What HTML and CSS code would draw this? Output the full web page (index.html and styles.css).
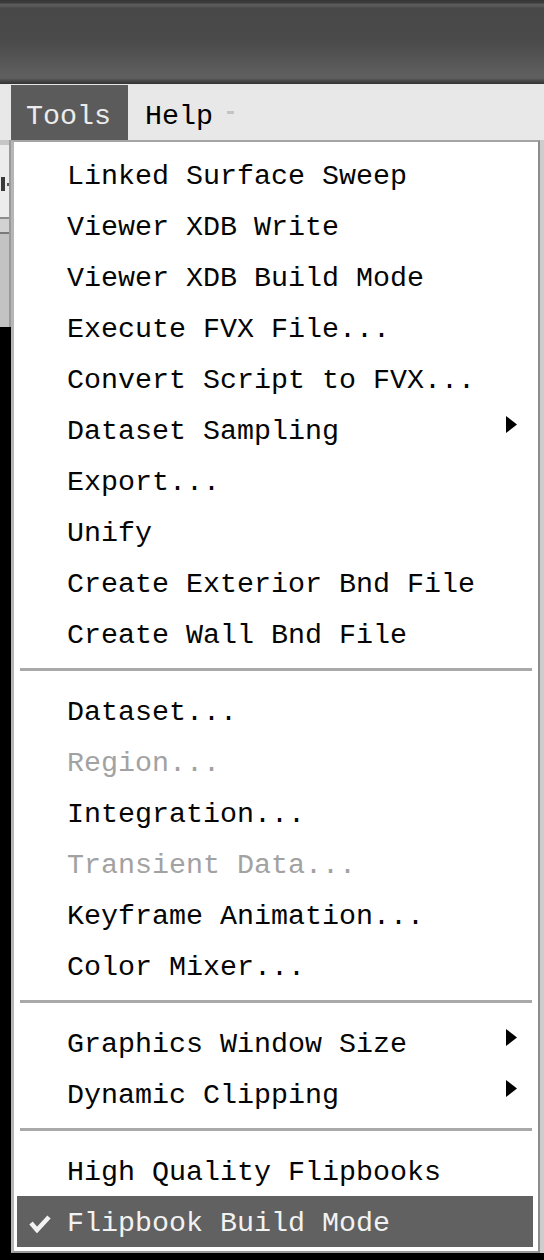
FILE: index.html
```html
<!DOCTYPE html>
<html>
<head>
<meta charset="utf-8">
<link rel="stylesheet" href="styles.css">
</head>
<body>
<div class="screen">
  <div class="titlebar"></div>
  <div class="menubar">
    <div class="mb-left"></div>
    <div class="mb-item active">Tools</div>
    <div class="mb-item">Help</div>
    <span class="mb-mark"></span>
  </div>
  <div class="main">
    <div class="side">
      <div class="s1"></div>
      <div class="s2"><i class="frag"></i><i class="dot"></i></div>
      <div class="s3"></div>
      <div class="s4"></div>
      <div class="s5"></div>
      <div class="s6"></div>
    </div>
    <div class="menu">
      <div class="item"><span class="icon"></span><span class="label">Linked Surface Sweep</span></div>
      <div class="item"><span class="icon"></span><span class="label">Viewer XDB Write</span></div>
      <div class="item"><span class="icon"></span><span class="label">Viewer XDB Build Mode</span></div>
      <div class="item"><span class="icon"></span><span class="label">Execute FVX File...</span></div>
      <div class="item"><span class="icon"></span><span class="label">Convert Script to FVX...</span></div>
      <div class="item"><span class="icon"></span><span class="label">Dataset Sampling</span><svg class="arrow" width="11" height="17" viewBox="0 0 11 17"><polygon points="0,0 11,8.5 0,17" fill="#000"/></svg></div>
      <div class="item"><span class="icon"></span><span class="label">Export...</span></div>
      <div class="item"><span class="icon"></span><span class="label">Unify</span></div>
      <div class="item"><span class="icon"></span><span class="label">Create Exterior Bnd File</span></div>
      <div class="item"><span class="icon"></span><span class="label">Create Wall Bnd File</span></div>
      <div class="sep"></div>
      <div class="item"><span class="icon"></span><span class="label">Dataset...</span></div>
      <div class="item disabled"><span class="icon"></span><span class="label">Region...</span></div>
      <div class="item"><span class="icon"></span><span class="label">Integration...</span></div>
      <div class="item disabled"><span class="icon"></span><span class="label">Transient Data...</span></div>
      <div class="item"><span class="icon"></span><span class="label">Keyframe Animation...</span></div>
      <div class="item"><span class="icon"></span><span class="label">Color Mixer...</span></div>
      <div class="sep"></div>
      <div class="item"><span class="icon"></span><span class="label">Graphics Window Size</span><svg class="arrow" width="11" height="17" viewBox="0 0 11 17"><polygon points="0,0 11,8.5 0,17" fill="#000"/></svg></div>
      <div class="item"><span class="icon"></span><span class="label">Dynamic Clipping</span><svg class="arrow" width="11" height="17" viewBox="0 0 11 17"><polygon points="0,0 11,8.5 0,17" fill="#000"/></svg></div>
      <div class="sep"></div>
      <div class="item"><span class="icon"></span><span class="label">High Quality Flipbooks</span></div>
      <div class="item selected"><span class="icon"><svg class="check" width="22" height="18" viewBox="0 0 22 18"><polyline points="2,8 8,15 20,2" fill="none" stroke="#f2f2f2" stroke-width="4.5"/></svg></span><span class="label">Flipbook Build Mode</span></div>
    </div>
    <div class="rside"></div>
  </div>
</div>
</body>
</html>
```
FILE: styles.css
```css
html, body {
  margin: 0;
  padding: 0;
}
body {
  background: #000;
  width: 544px;
  height: 1260px;
  overflow: hidden;
  font-family: "Liberation Mono", "DejaVu Sans Mono", monospace;
  font-size: 28.33px;
}
.screen {
  display: flex;
  flex-direction: column;
  width: 544px;
}
.titlebar {
  height: 84px;
  background: linear-gradient(to bottom,
    #363636 0px, #3c3c3c 3px, #5a5a5a 4px, #5a5a5a 6px, #484848 8px,
    #4a4a4a 40px, #525252 55px, #5c5c5c 70px, #5f5f5f 78px,
    #474747 81px, #333333 84px);
}
.menubar {
  height: 56px;
  background: #e8e8e8;
  display: flex;
  align-items: flex-start;
  position: relative;
}
.mb-left {
  width: 11px;
  height: 56px;
}
.mb-item {
  margin-top: 1px;
  height: 55px;
  box-sizing: border-box;
  padding: 8px 0 0 0;
  line-height: 47px;
  color: #000;
  white-space: nowrap;
}
.mb-item.active {
  width: 117px;
  padding-left: 15px;
  background: #5b5b5b;
  color: #ececec;
}
.mb-item + .mb-item {
  margin-left: 17px;
}
.mb-mark {
  position: absolute;
  left: 227px;
  top: 27px;
  width: 7px;
  height: 3px;
  background: #c4c4c4;
}
.main {
  display: flex;
  height: 1113px;
}
.side {
  width: 11px;
  display: flex;
  flex-direction: column;
}
.side > div {
  box-sizing: border-box;
  border-right: 2px solid #9a9a9a;
}
.s1 { height: 5px; background: #c6c6c6; }
.s2 {
  height: 72px;
  background: #ececec;
  display: flex;
  align-items: flex-start;
  justify-content: flex-end;
  gap: 2px;
  padding-top: 32px;
}
.s2 .frag {
  display: block;
  width: 4px;
  height: 14px;
  background: #3a3a3a;
}
.s2 .dot {
  display: block;
  width: 2px;
  height: 3px;
  margin-top: 6px;
  background: #555;
}
.s3 { height: 2px; background: #8c8c8c; }
.s4 { height: 13px; background: #d2d2d2; }
.s5 { height: 2px; background: #7a7a7a; }
.s6 { height: 93px; background: #c3c3c3; }
.menu {
  width: 529px;
  box-sizing: border-box;
  background: #fff;
  border-top: 2px solid #a4a4a4;
  border-left: 3px solid #b6b6b6;
  border-right: 2px solid #8c8c8c;
  border-bottom: 2px solid #9a9a9a;
  padding: 7px 0 4px 0;
  display: flex;
  flex-direction: column;
}
.item {
  display: flex;
  align-items: flex-start;
  height: 51px;
  box-sizing: border-box;
  margin: 0 5px 0 3px;
  padding: 5px 16px 0 0;
  line-height: 46px;
  color: #050505;
  white-space: nowrap;
}
.icon {
  width: 50px;
  flex: none;
  height: 46px;
}
.label {
  flex: 1;
}
.arrow {
  flex: none;
  margin-top: 7px;
}
.item.disabled {
  color: #a2a2a2;
}
.item.selected {
  background: #616161;
  color: #f2f2f2;
}
.check {
  display: block;
  margin: 14px 0 0 12px;
}
.sep {
  height: 3px;
  margin: 9px 6px 14px 6px;
  background: #a9a9a9;
}
.rside {
  width: 4px;
  background: #cdcdcd;
}
```
